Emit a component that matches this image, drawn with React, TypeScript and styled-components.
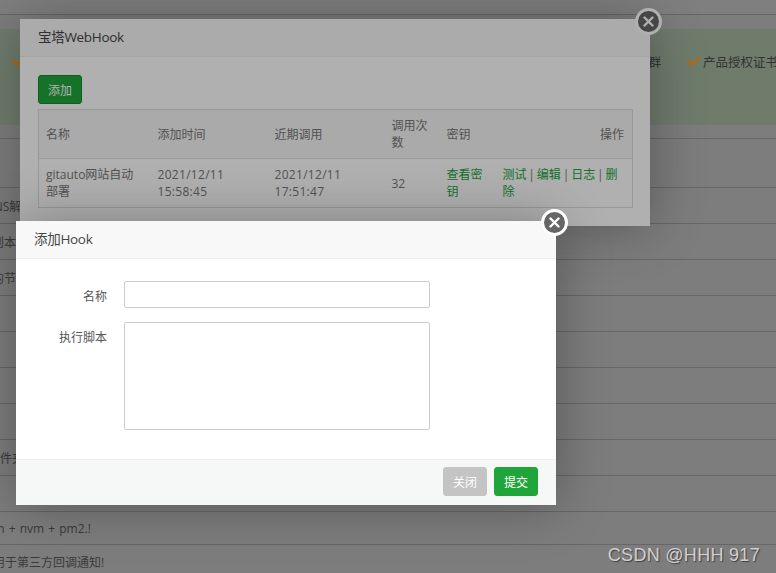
import styled, { createGlobalStyle } from 'styled-components'
import { FaCheck } from 'react-icons/fa'

const FONT = `"Open Sans", "Noto Sans CJK SC", sans-serif`

const GlobalStyle = createGlobalStyle`
  html, body {
    margin: 0;
    padding: 0;
    height: 100%;
    overflow: hidden;
    background: #b5b5b5;
    font-family: ${FONT};
  }
  * { box-sizing: border-box; }
`

// the page behind the first dialog is already dimmed, so its colours are the dark ones
const Page = styled.div`
  position: relative;
  width: 776px;
  height: 573px;
  overflow: hidden;
  background: #b5b5b5;
`

const TopBar = styled.div`
  height: 15px;
  background: #b8b8b8;
  border-bottom: 1px solid #949494;
`

const Banner = styled.div`
  display: flex;
  gap: 26px;
  height: 96px;
  margin-top: 14px;
  padding: 23px 0 0 12px;
  background: #a1b49d;
  font-size: 12.5px;
  color: #4a4a4a;
`

const BannerItem = styled.span<{ $offset?: number }>`
  display: flex;
  align-items: center;
  gap: 3px;
  height: 18px;
  margin-left: ${(props) => props.$offset ?? 0}px;
  white-space: nowrap;
  svg {
    color: #ff9a23;
    font-size: 13px;
  }
`

const RowList = styled.div`
  margin-top: 13px;
  border-top: 1px solid #949494;
`

const BgRow = styled.div<{ $height?: number }>`
  display: flex;
  align-items: center;
  height: ${(props) => props.$height ?? 36}px;
  border-bottom: 1px solid #949494;
  font-size: 12px;
  word-spacing: 1px;
  color: #555;
  white-space: nowrap;
`

const BgText = styled.span<{ $shift: number }>`
  margin-left: ${(props) => props.$shift}px;
`

const Overlay = styled.div`
  position: absolute;
  inset: 0;
  background: rgba(0, 0, 0, 0.31);
`

const Dialog = styled.div<{ $left: number; $top: number; $width: number; $height: number }>`
  position: absolute;
  left: ${(props) => props.$left}px;
  top: ${(props) => props.$top}px;
  width: ${(props) => props.$width}px;
  height: ${(props) => props.$height}px;
  display: flex;
  flex-direction: column;
  background: #fff;
  box-shadow: 1px 1px 50px rgba(0, 0, 0, 0.3);
`

const DialogTitle = styled.div<{ $pad: number }>`
  flex: none;
  height: 38px;
  padding-left: ${(props) => props.$pad}px;
  line-height: 37px;
  font-size: 13.5px;
  letter-spacing: -0.3px;
  color: #444;
  background: #f8f8f8;
  border-bottom: 1px solid #eee;
`

const CloseButton = styled.div<{ $left: number; $top: number }>`
  position: absolute;
  left: ${(props) => props.$left}px;
  top: ${(props) => props.$top}px;
  display: flex;
  align-items: center;
  justify-content: center;
  width: 27px;
  height: 27px;
  background: #666;
  border: 3px solid #fff;
  border-radius: 50%;
`

const HookBody = styled.div`
  padding: 18px 18px 0;
`

const PrimaryButton = styled.button<{ $grey?: boolean }>`
  width: 44px;
  height: 29px;
  padding: 0;
  font-family: ${FONT};
  font-size: 12px;
  color: #fff;
  background: ${(props) => (props.$grey ? '#c4c4c4' : '#20a53a')};
  border: 1px solid ${(props) => (props.$grey ? '#c4c4c4' : '#20a53a')};
  border-radius: 3px;
`

const AddButton = styled(PrimaryButton)`
  display: block;
  margin-bottom: 5px;
  border-color: #158a2c;
`

const HookTable = styled.table`
  width: 594px;
  table-layout: fixed;
  border-collapse: collapse;
  font-size: 12px;
  line-height: 17px;
  color: #777;
  border: 1px solid #ddd;

  th, td {
    height: 49px;
    padding: 0 7px;
    font-weight: 400;
    text-align: left;
    vertical-align: middle;
  }
  thead tr {
    background: #f6f6f6;
    border-bottom: 1px solid #ddd;
  }
`

const OpsHead = styled.th`
  && {
    padding-right: 8px;
    text-align: right;
  }
`

const Stamp = styled.span`
  letter-spacing: 0.3px;
`

const GreenLink = styled.a`
  color: #20a53a;
`

const Sep = styled.span`
  display: inline-block;
  width: 10.3px;
  text-align: center;
`

const FormBody = styled.div`
  flex: 1;
  padding: 22px 0 0;
`

const FormRow = styled.div`
  display: flex;
  margin-bottom: 14px;
`

const FormLabel = styled.label`
  flex: none;
  width: 91px;
  margin-right: 17px;
  padding-top: 7px;
  font-size: 12px;
  line-height: 17px;
  color: #555;
  text-align: right;
`

const TextInput = styled.input`
  width: 306px;
  height: 27px;
  background: #fff;
  border: 1px solid #ccc;
  border-radius: 2px;
`

const TextArea = styled.textarea`
  display: block;
  width: 306px;
  height: 108px;
  background: #fff;
  border: 1px solid #ccc;
  border-radius: 2px;
  resize: none;
`

const DialogFooter = styled.div`
  flex: none;
  display: flex;
  justify-content: flex-end;
  gap: 7px;
  height: 46px;
  padding: 7px 18px 0 0;
  background: #f6f8f8;
  border-top: 1px solid #eee;
`

const Watermark = styled.div`
  position: absolute;
  right: 16px;
  bottom: 8px;
  font-family: "Liberation Sans", sans-serif;
  font-size: 18px;
  line-height: 20px;
  letter-spacing: 0.3px;
  color: #d0d0d0;
  text-shadow: 1px 1px 1px rgba(0, 0, 0, 0.5);
`

const COLUMNS = [112, 117, 117, 55, 56, 137]

const BG_ROWS: { text?: string; shift?: number; height?: number }[] = [
  { height: 49 },
  { text: 'DNS解析', shift: -15 },
  { text: '到本地', shift: -8 },
  { text: '的节点', shift: -8 },
  {},
  {},
  {},
  {},
  { text: '文件夹', shift: -12 },
  {},
  { text: 'python + nvm + pm2.!', shift: -35, height: 33 },
  { text: '用于第三方回调通知!', shift: -7, height: 34 },
]

function CloseIcon(): JSX.Element {
  return (
    <svg width="11" height="11" viewBox="0 0 11 11">
      <path d="M1.5 1.5 L9.5 9.5 M9.5 1.5 L1.5 9.5" stroke="#fff" strokeWidth="2.4" strokeLinecap="round" />
    </svg>
  )
}

export default function App(): JSX.Element {
  return (
    <Page>
      <GlobalStyle />
      <TopBar />
      <Banner>
        <BannerItem>
          <FaCheck />
          企业版专享
        </BannerItem>
        <BannerItem $offset={532}>群</BannerItem>
        <BannerItem>
          <FaCheck />
          产品授权证书
        </BannerItem>
      </Banner>
      <RowList>
        {BG_ROWS.map((row, index) => (
          <BgRow key={index} $height={row.height}>
            {row.text && <BgText $shift={row.shift ?? 0}>{row.text}</BgText>}
          </BgRow>
        ))}
      </RowList>

      <Dialog $left={20} $top={19} $width={630} $height={207}>
        <DialogTitle $pad={18}>宝塔WebHook</DialogTitle>
        <HookBody>
          <AddButton>添加</AddButton>
          <HookTable>
            <colgroup>
              {COLUMNS.map((width, index) => (
                <col key={index} width={width} />
              ))}
            </colgroup>
            <thead>
              <tr>
                <th>名称</th>
                <th>添加时间</th>
                <th>近期调用</th>
                <th>调用次数</th>
                <th>密钥</th>
                <OpsHead>操作</OpsHead>
              </tr>
            </thead>
            <tbody>
              <tr>
                <td>gitauto网站自动部署</td>
                <td>
                  <Stamp>2021/12/11 15:58:45</Stamp>
                </td>
                <td>
                  <Stamp>2021/12/11 17:51:47</Stamp>
                </td>
                <td>32</td>
                <td>
                  <GreenLink>查看密钥</GreenLink>
                </td>
                <td>
                  <GreenLink>测试</GreenLink>
                  <Sep>|</Sep>
                  <GreenLink>编辑</GreenLink>
                  <Sep>|</Sep>
                  <GreenLink>日志</GreenLink>
                  <Sep>|</Sep>
                  <GreenLink>删除</GreenLink>
                </td>
              </tr>
            </tbody>
          </HookTable>
        </HookBody>
        <CloseButton $left={615} $top={-11}>
          <CloseIcon />
        </CloseButton>
      </Dialog>

      <Overlay />
      <Dialog $left={16} $top={221} $width={540} $height={284}>
        <DialogTitle $pad={18}>添加Hook</DialogTitle>
        <FormBody>
          <FormRow>
            <FormLabel>名称</FormLabel>
            <TextInput />
          </FormRow>
          <FormRow>
            <FormLabel>执行脚本</FormLabel>
            <TextArea />
          </FormRow>
        </FormBody>
        <DialogFooter>
          <PrimaryButton $grey>关闭</PrimaryButton>
          <PrimaryButton>提交</PrimaryButton>
        </DialogFooter>
        <CloseButton $left={525} $top={-12}>
          <CloseIcon />
        </CloseButton>
      </Dialog>

      <Watermark>CSDN @HHH 917</Watermark>
    </Page>
  )
}
